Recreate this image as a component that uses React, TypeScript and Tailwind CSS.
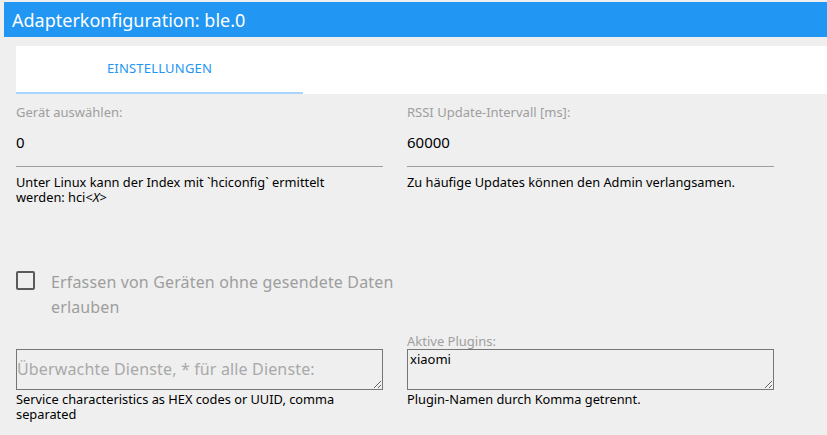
export default function App() {
  return (
    <div className="w-[827px] h-[435px] overflow-hidden bg-[#efefef] pt-[2px] pl-[4px] text-black" style={{ fontFamily: '"Noto Sans", "Open Sans", sans-serif' }}>
      <div className="h-[35px] bg-[#2196f3] flex items-center pl-[8px]">
        <h1 className="text-[18px] text-white leading-none">Adapterkonfiguration: ble.0</h1>
      </div>

      <div className="pl-[12px] pt-[9px]">
        <div className="h-[48px] bg-white flex">
          <div className="w-[287px] h-full flex items-center justify-center border-b-2 border-[#a6d4fa]">
            <span className="text-[13px] text-[#2196f3] tracking-[0.2px]">EINSTELLUNGEN</span>
          </div>
        </div>

        <div className="grid grid-cols-[367px_367px] gap-x-[24px] pt-[9px]">
          <div>
            <label className="block text-[13px] text-[#9e9e9e] leading-[18px]">Gerät auswählen:</label>
            <div className="h-[46px] flex items-center border-b border-[#9e9e9e] text-[15px] pb-[2px]">0</div>
            <p className="text-[12.8px] leading-[15px] mt-[8px]">
              <span className="block">Unter Linux kann der Index mit `hciconfig` ermittelt</span>
              werden: hci&lt;<i>X</i>&gt;
            </p>
          </div>
          <div>
            <label className="block text-[13px] text-[#9e9e9e] leading-[18px]">RSSI Update-Intervall [ms]:</label>
            <div className="h-[46px] flex items-center border-b border-[#9e9e9e] text-[15px] pb-[2px]">60000</div>
            <p className="text-[12.8px] leading-[15px] mt-[8px]">Zu häufige Updates können den Admin verlangsamen.</p>
          </div>
        </div>

        <div className="flex items-start gap-[16px] mt-[65px] w-[400px]">
          <span className="mt-[1px] w-[19px] h-[19px] shrink-0 rounded-[2px] border-2 border-[#5a5a5a]" />
          <span className="text-[16px] leading-[25px] text-[#9e9e9e] tracking-[0.15px]">
            Erfassen von Geräten ohne gesendete Daten erlauben
          </span>
        </div>

        <div className="grid grid-cols-[367px_367px] gap-x-[24px] mt-[14px]">
          <div className="pt-[15px]">
            <textarea
              className="block w-full h-[41px] border border-[#767676] bg-transparent text-[16px] leading-[20px] px-0 pt-[9px] pb-0 tracking-[0.15px] placeholder:text-[#a9a9a9] outline-none resize-y"
              placeholder="Überwachte Dienste, * für alle Dienste:"
            />
            <p className="text-[12.8px] leading-[15px] mt-[2px]">Service characteristics as HEX codes or UUID, comma separated</p>
          </div>
          <div>
            <label className="block text-[13px] text-[#9e9e9e] leading-[15px]">Aktive Plugins:</label>
            <textarea
              className="block w-full h-[41px] border border-[#767676] bg-transparent text-[13px] leading-[16px] px-[2px] py-[1px] outline-none resize-y"
              defaultValue="xiaomi"
            />
            <p className="text-[12.8px] leading-[15px] mt-[2px]">Plugin-Namen durch Komma getrennt.</p>
          </div>
        </div>
      </div>
    </div>
  );
}
